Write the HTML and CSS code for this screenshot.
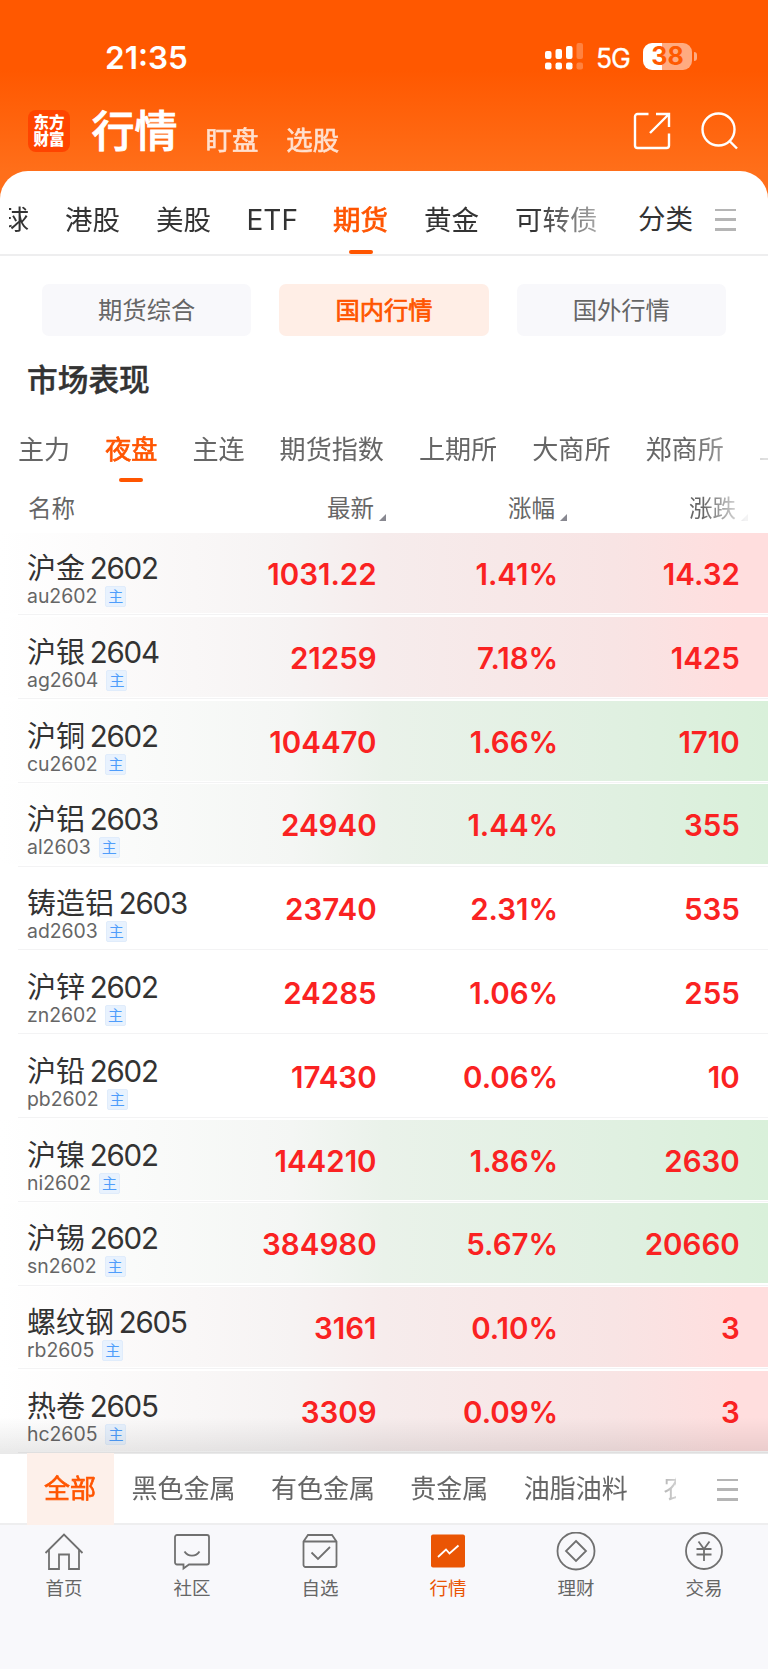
FILE: index.html
```
<!DOCTYPE html>
<html lang="zh-CN">
<head>
    <meta charset="UTF-8">
    <meta name="viewport" content="width=device-width, initial-scale=1.0">
    <title>行情</title>
    <link rel="stylesheet" href="styles.css">
</head>
<body>
    <header id="top">
        <div class="status">
            <span class="time">21:35</span>
            <svg class="signal" width="38" height="27" viewBox="0 0 38 27" fill="#fff">
                <rect x="0" y="8" width="6.5" height="8" rx="2"/>
                <rect x="10.5" y="6" width="6.5" height="10" rx="2"/>
                <rect x="21" y="3" width="6.5" height="13" rx="2"/>
                <rect x="0" y="19.5" width="6.5" height="7" rx="2"/>
                <rect x="10.5" y="19.5" width="6.5" height="7" rx="2"/>
                <rect x="21" y="19.5" width="6.5" height="7" rx="2"/>
                <g opacity=".25">
                    <rect x="31.5" y="0" width="6.5" height="16" rx="2"/>
                    <rect x="31.5" y="19.5" width="6.5" height="7" rx="2"/>
                </g>
            </svg>
            <span class="net">5G</span>
            <div class="battery"><span>38</span></div>
            <i class="battery-cap"></i>
        </div>
        <div class="title-bar">
            <div class="logo">东方<br>财富</div>
            <h1>行情</h1>
            <span class="sub-title">盯盘</span>
            <span class="sub-title">选股</span>
            <svg class="share" width="38" height="38" viewBox="0 0 38 38" fill="none" stroke="#fff" stroke-width="2.4">
                <path d="M15.5 2H4.5a2.500 2.500 0 0 0-2.500 2.500v29a2.500 2.500 0 0 0 2.500 2.500h29a2.500 2.500 0 0 0 2.500-2.500V21.500M23 2h13v13M36 2L17 21"/>
            </svg>
            <svg class="search" width="38" height="38" viewBox="0 0 38 38" fill="none" stroke="#fff" stroke-width="2.4">
                <circle cx="17.5" cy="17.5" r="16"/>
                <path d="M28.5 29l7.5 7.5"/>
            </svg>
        </div>
    </header>

    <main>
        <nav class="tabs">
            <div class="tabs-scroll">
                <a>全球</a><a>港股</a><a>美股</a><a class="etf">ETF</a><a class="on">期货</a><a>黄金</a><a>可转债</a>
            </div>
            <a class="sort">分类</a>
            <i class="menu"></i>
        </nav>

        <div class="switch">
            <span>期货综合</span>
            <span class="on">国内行情</span>
            <span>国外行情</span>
        </div>

        <h2>市场表现</h2>

        <nav class="sub-tabs">
            <a>主力</a><a class="on">夜盘</a><a>主连</a><a>期货指数</a><a>上期所</a><a>大商所</a><a>郑商所</a><a>上期能源</a>
        </nav>

        <div class="head">
            <span>名称</span>
            <span class="col">最新<i></i></span>
            <span class="col">涨幅<i></i></span>
            <span class="col fade">涨跌<i></i></span>
        </div>

        <div class="list">
            <div class="row red">
                <div class="name"><b>沪金 <em>2602</em></b><p>au2602<i>主</i></p></div>
                <span>1031.22</span><span>1.41%</span><span>14.32</span>
            </div>
            <div class="row red">
                <div class="name"><b>沪银 <em>2604</em></b><p>ag2604<i>主</i></p></div>
                <span>21259</span><span>7.18%</span><span>1425</span>
            </div>
            <div class="row green">
                <div class="name"><b>沪铜 <em>2602</em></b><p>cu2602<i>主</i></p></div>
                <span>104470</span><span>1.66%</span><span>1710</span>
            </div>
            <div class="row green">
                <div class="name"><b>沪铝 <em>2603</em></b><p>al2603<i>主</i></p></div>
                <span>24940</span><span>1.44%</span><span>355</span>
            </div>
            <div class="row">
                <div class="name"><b>铸造铝 <em>2603</em></b><p>ad2603<i>主</i></p></div>
                <span>23740</span><span>2.31%</span><span>535</span>
            </div>
            <div class="row">
                <div class="name"><b>沪锌 <em>2602</em></b><p>zn2602<i>主</i></p></div>
                <span>24285</span><span>1.06%</span><span>255</span>
            </div>
            <div class="row">
                <div class="name"><b>沪铅 <em>2602</em></b><p>pb2602<i>主</i></p></div>
                <span>17430</span><span>0.06%</span><span>10</span>
            </div>
            <div class="row green">
                <div class="name"><b>沪镍 <em>2602</em></b><p>ni2602<i>主</i></p></div>
                <span>144210</span><span>1.86%</span><span>2630</span>
            </div>
            <div class="row green">
                <div class="name"><b>沪锡 <em>2602</em></b><p>sn2602<i>主</i></p></div>
                <span>384980</span><span>5.67%</span><span>20660</span>
            </div>
            <div class="row red">
                <div class="name"><b>螺纹钢 <em>2605</em></b><p>rb2605<i>主</i></p></div>
                <span>3161</span><span>0.10%</span><span>3</span>
            </div>
            <div class="row red">
                <div class="name"><b>热卷 <em>2605</em></b><p>hc2605<i>主</i></p></div>
                <span>3309</span><span>0.09%</span><span>3</span>
            </div>
        </div>
    </main>

    <div class="filter">
        <div class="filter-scroll">
            <a class="on">全部</a><a>黑色金属</a><a>有色金属</a><a>贵金属</a><a>油脂油料</a><a>农副</a>
        </div>
        <i class="menu"></i>
    </div>

    <footer>
        <a>
            <svg width="40" height="40" viewBox="0 0 40 40"><path d="M1.500 21L20 2.500 38.500 21M5 18v19h10V22.500h10V37h10V18"/></svg>
            首页
        </a>
        <a>
            <svg width="40" height="40" viewBox="0 0 40 40"><path d="M5 3h30a2 2 0 0 1 2 2v25.500a2 2 0 0 1-2 2H17L11.500 36.500v-4H5a2 2 0 0 1-2-2V5a2 2 0 0 1 2-2zM12.500 19.500c3.500 5.500 11.500 5.500 15 0"/></svg>
            社区
        </a>
        <a>
            <svg width="40" height="40" viewBox="0 0 40 40"><path d="M3.500 9.500L8 3h24l4.500 6.500V33a2 2 0 0 1-2 2h-29a2 2 0 0 1-2-2zM3.500 9.500h33M11.500 20.500l6.500 6.500L30 15"/></svg>
            自选
        </a>
        <a class="on">
            <svg width="40" height="40" viewBox="0 0 40 40"><rect x="3" y="2.5" width="34" height="33" rx="2"/><path d="M10 25l8-7.500 3.500 4L30.500 13.500"/></svg>
            行情
        </a>
        <a>
            <svg width="40" height="40" viewBox="0 0 40 40"><circle cx="20" cy="19" r="18.5"/><path d="M20 9l10 10-10 10L10 19z"/></svg>
            理财
        </a>
        <a>
            <svg width="40" height="40" viewBox="0 0 40 40"><circle cx="20" cy="19" r="18"/><path d="M14.500 9.500L20 17l5.500-7.500M12.500 17h15M12.500 22.500h15M20 17v12"/></svg>
            交易
        </a>
    </footer>
</body>
</html>
```

FILE: styles.css
```
* {
    box-sizing: border-box;
}

body {
    margin: 0;
    width: 768px;
    height: 1669px;
    overflow: hidden;
    display: flex;
    flex-direction: column;
    background-color: #fff;
    color: #333;
    font-family: Inter, "Noto Sans CJK SC", sans-serif;
}

i, em {
    font-style: normal;
}

#top {
    height: 210px;
    flex: none;
    color: #fff;
    background: linear-gradient(#ff5800 70px, #ff6f1a 172px);
}

.status {
    height: 100px;
    padding: 30px 71px 0 105px;
    display: flex;
    align-items: flex-start;
}

.time {
    font-size: 31.5px;
    font-weight: 600;
    line-height: 56px;
    margin-right: auto;
}

.signal {
    margin-top: 13px;
}

.net {
    width: 34px;
    margin: 0 13px;
    font-size: 26.5px;
    line-height: 56px;
    letter-spacing: -1px;
    -webkit-text-stroke: 0.3px #fff;
}

.battery {
    width: 49px;
    height: 27px;
    margin-top: 13px;
    border-radius: 9px;
    background: linear-gradient(90deg, #fff 19px, #ffab80 19px);
    color: #ff5a00;
    font-size: 25px;
    font-weight: 700;
    line-height: 27px;
    text-align: center;
}

.battery-cap {
    width: 3px;
    height: 9px;
    margin: 22px 0 0 2px;
    border-radius: 0 4px 4px 0;
    background-color: #ffab80;
}

.title-bar {
    height: 62px;
    padding: 0 29px 0 28px;
    display: flex;
    align-items: flex-end;
}

.logo {
    width: 42px;
    height: 42px;
    margin-bottom: 10px;
    padding-top: 4px;
    border-radius: 8px;
    background-color: #ff4400;
    font-size: 15.5px;
    font-weight: 900;
    line-height: 17px;
    text-align: center;
}

h1 {
    margin: 0 28px 1px 21.5px;
    font-size: 43px;
    line-height: 60px;
    font-weight: 500;
    -webkit-text-stroke: 0.8px #fff;
}

.sub-title {
    margin-right: 28px;
    font-size: 26.4px;
    line-height: 44px;
    opacity: 0.8;
    -webkit-text-stroke: 0.6px #fff;
}

.share {
    margin: 0 30px 12px auto;
}

.search {
    margin-bottom: 12px;
}

main {
    position: relative;
    height: 1283px;
    margin-top: -39px;
    flex: none;
    overflow: hidden;
    border-radius: 28px 28px 0 0;
    background-color: #fff;
}

.tabs {
    height: 85px;
    padding-left: 9px;
    display: flex;
    align-items: center;
    border-bottom: 2px solid #eeeeef;
    font-size: 27.5px;
}

.tabs-scroll {
    width: 592px;
    height: 85px;
    display: flex;
    align-items: center;
    gap: 36px;
    overflow: hidden;
    white-space: nowrap;
    -webkit-mask-image: linear-gradient(90deg, #000 525px, rgba(0, 0, 0, 0.4) 592px);
}

.tabs-scroll a {
    position: relative;
    height: 85px;
    line-height: 101px;
}

.tabs-scroll a:first-child {
    margin-left: -35px;
}

.tabs-scroll .etf {
    width: 51px;
    margin: 0 -0.5px;
    font-size: 28px;
}

.tabs .on,
.sub-tabs .on,
.filter .on,
.switch .on {
    color: #ff5500;
    -webkit-text-stroke: 0.7px #ff5500;
}

.on::after {
    content: "";
    position: absolute;
    left: 50%;
    bottom: 1px;
    width: 24px;
    height: 4px;
    margin-left: -12px;
    border-radius: 2px;
    background-color: #ff5500;
}

.sort {
    margin-left: 37px;
    line-height: 40px;
    padding-top: 13px;
}

.menu {
    width: 21px;
    height: 22px;
    margin-left: 22px;
    background: linear-gradient(#b5b5b5 2.5px, transparent 2.5px 9.5px, #b5b5b5 9.5px 12px, transparent 12px 19.5px, #b5b5b5 19.5px);
}

.tabs .menu {
    margin-top: 15px;
}

.switch {
    height: 108px;
    padding: 28px 42px;
    display: flex;
    gap: 28px;
}

.switch span {
    flex: 1;
    border-radius: 7px;
    background-color: #f8f8fb;
    color: #666;
    font-size: 24.3px;
    line-height: 53px;
    text-align: center;
}

.switch .on {
    background-color: #ffeee6;
}

.switch .on::after,
.filter .on::after,
footer .on::after {
    display: none;
}

h2 {
    margin: 0;
    padding-left: 27px;
    font-size: 30.7px;
    font-weight: 500;
    line-height: 32px;
    -webkit-text-stroke: 0.4px #333;
}

.sub-tabs {
    height: 88px;
    padding-left: 18px;
    display: flex;
    gap: 35px;
    overflow: hidden;
    white-space: nowrap;
    color: #666;
    font-size: 26.1px;
    line-height: 107px;
    -webkit-mask-image: linear-gradient(90deg, #000 690px, rgba(0, 0, 0, 0.2) 765px);
}

.sub-tabs a {
    position: relative;
}

.sub-tabs .on::after {
    bottom: 2px;
}

.head {
    height: 49px;
    padding-left: 28px;
    display: flex;
    color: #666;
    font-size: 23.5px;
    line-height: 49px;
}

.head span {
    flex: none;
}

.head span:first-child {
    width: 183px;
}

.col {
    width: 181px;
    padding-right: 6px;
    text-align: right;
}

.col i {
    display: inline-block;
    margin-left: 5px;
    border-left: 7px solid transparent;
    border-bottom: 7px solid #888890;
    transform: translateY(4px);
}

.fade {
    -webkit-mask-image: linear-gradient(90deg, #000 130px, rgba(0, 0, 0, 0.1) 172px);
}

.row {
    position: relative;
    height: 83.8px;
    padding: 0 0 4px 27px;
    display: flex;
    background-size: 100% 80px;
    background-repeat: no-repeat;
}

.row::after {
    content: "";
    position: absolute;
    left: 18px;
    right: 0;
    bottom: 1.5px;
    height: 1px;
    background-color: #f3f3f4;
}

.red {
    background-image: linear-gradient(90deg, #fff 0, #f6f3f3 38%, #f6ecec 50%, #f8e4e4 80%, #ffdede 96%);
}

.green {
    background-image: linear-gradient(90deg, #fff 0, #f4f6f4 38%, #eaf2ea 50%, #e0f0e1 80%, #d9f0da 100%);
}

.name {
    width: 168px;
    flex: none;
    white-space: nowrap;
}

.name b {
    display: block;
    height: 53px;
    padding-top: 17px;
    font-size: 29px;
    font-weight: 400;
    line-height: 37px;
}

.name em {
    margin-left: -3.5px;
    font-size: 29.5px;
    letter-spacing: -1.2px;
}

.name p {
    margin: 0;
    display: flex;
    color: #666;
    font-size: 19.4px;
    line-height: 20px;
}

.name i {
    width: 21px;
    height: 21px;
    margin-left: 8px;
    border: 1px solid #e0ecfb;
    border-radius: 2px;
    background-color: #e8f2fe;
    color: #4f9dfb;
    font-size: 15px;
    line-height: 19px;
    text-align: center;
}

.row > span {
    width: 181.6px;
    flex: none;
    color: #fa2222;
    font-size: 29.5px;
    font-weight: 600;
    line-height: 82px;
    text-align: right;
}

.list {
    position: relative;
}

.list::after {
    content: "";
    position: absolute;
    left: 0;
    right: 0;
    bottom: 0;
    height: 38px;
    background: linear-gradient(rgba(0, 0, 0, 0), rgba(0, 0, 0, 0.09));
}

.filter {
    height: 71px;
    flex: none;
    padding-left: 26.5px;
    display: flex;
    align-items: center;
    border-bottom: 2px solid #eeeeef;
    background-color: #fff;
    color: #666;
    font-size: 26px;
}

.filter-scroll {
    width: 649px;
    display: flex;
    overflow: hidden;
    white-space: nowrap;
    line-height: 72px;
    -webkit-mask-image: linear-gradient(90deg, #000 600px, rgba(0, 0, 0, 0.3) 649px);
}

.filter-scroll a {
    margin-right: 35.4px;
}

.filter .on {
    margin-right: 18px;
    padding: 0 17.5px;
    background-color: #fdf0ea;
}

.filter .menu {
    margin-left: 41px;
    margin-top: 2px;
}

footer {
    flex: 1;
    padding-top: 7px;
    display: flex;
    background-color: #f8f8fb;
    color: #666;
    font-size: 18.5px;
}

footer a {
    width: 128px;
    display: flex;
    flex-direction: column;
    align-items: center;
    line-height: 32px;
}

footer svg {
    fill: none;
    stroke: #707070;
    stroke-width: 1.8;
}

footer .on {
    color: #ea5504;
}

footer .on rect {
    fill: #ea5504;
    stroke: none;
}

footer .on path {
    stroke: #fff;
}
```
